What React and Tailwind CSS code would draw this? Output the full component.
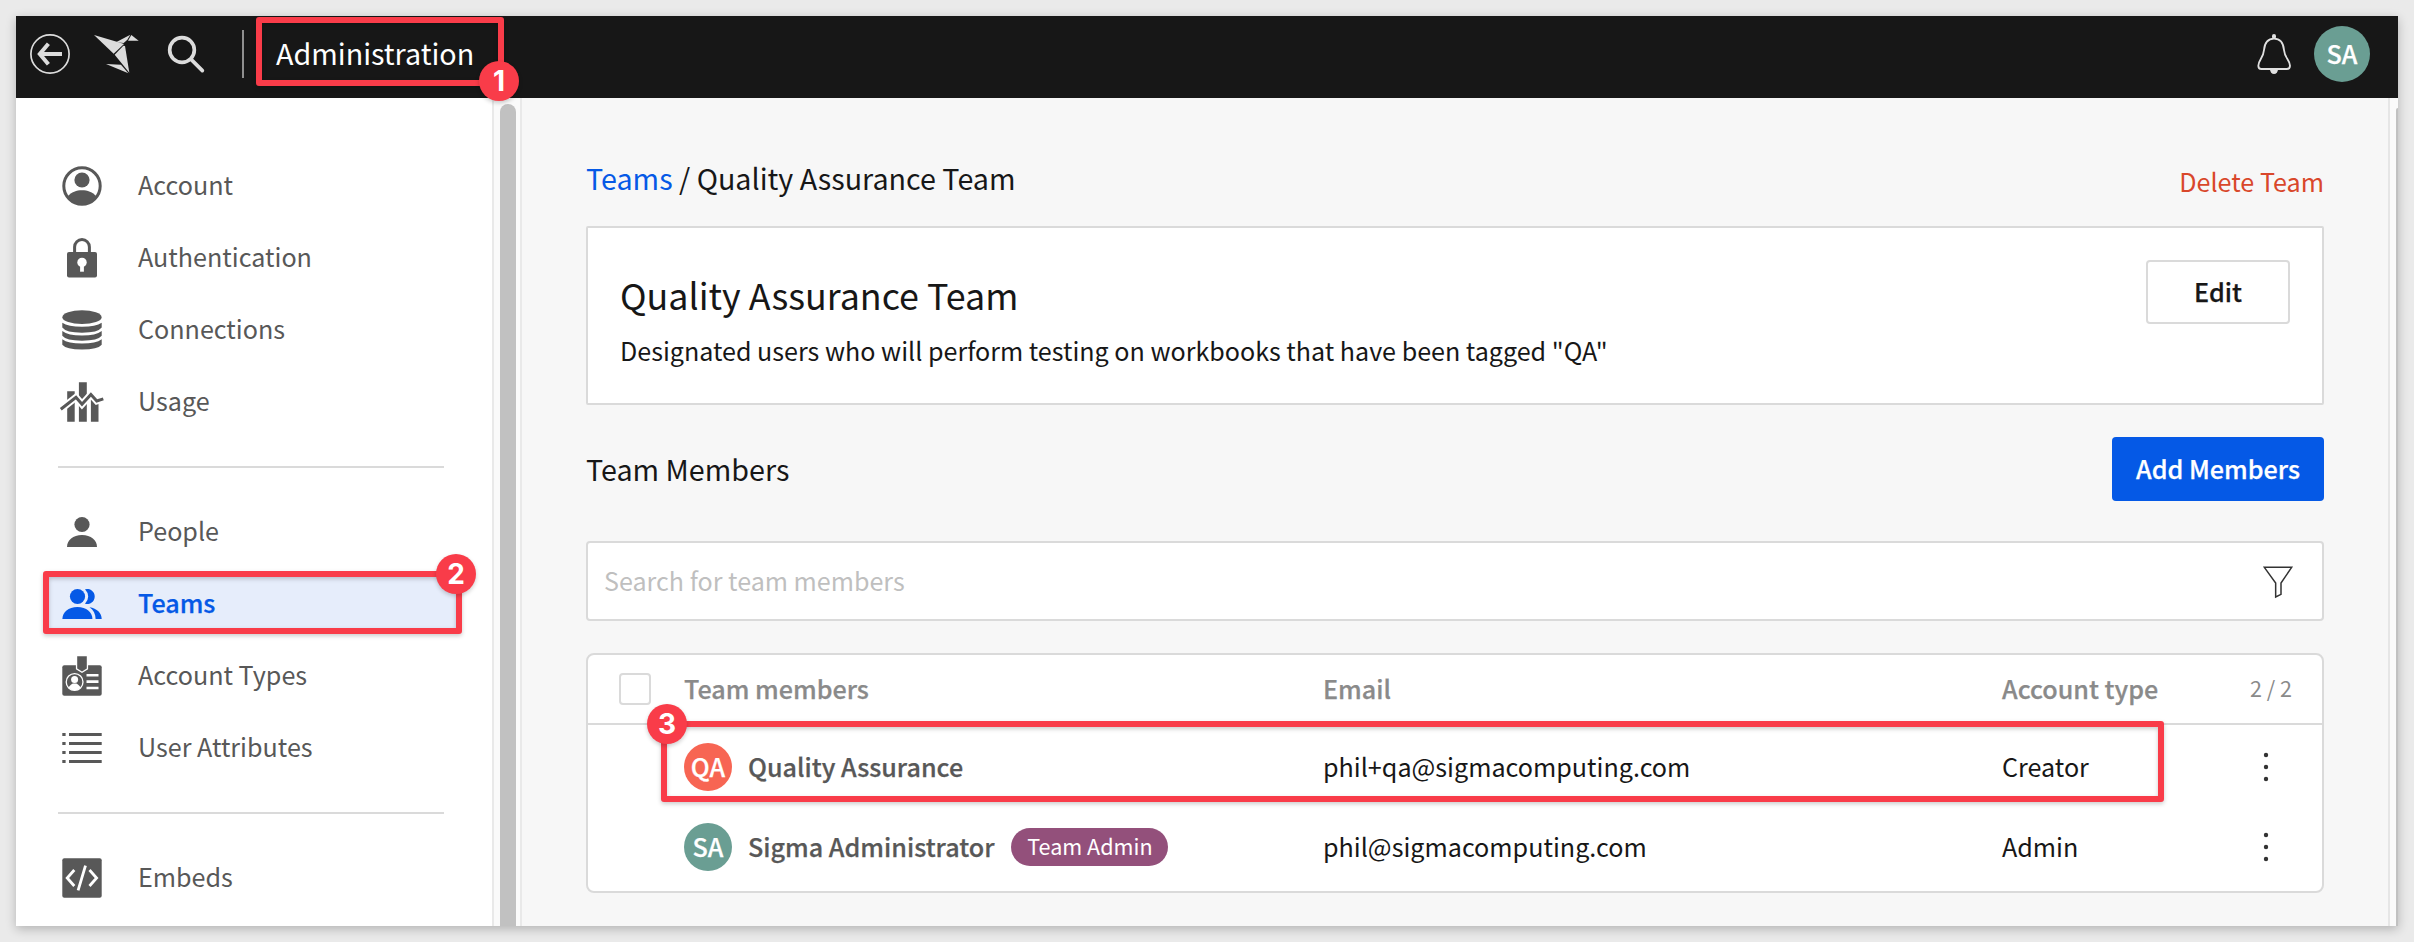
import React from "react";

const ICON = "h-10 w-10 shrink-0 overflow-visible";

function BackIcon() {
  return (
    <svg className={ICON} viewBox="0 0 40 40" fill="none" stroke="#dcdcdc">
      <circle cx="20" cy="20" r="19.1" strokeWidth="1.7" />
      <path d="M18.4 9.8 9.8 20l8.6 10.2" strokeWidth="4" />
      <path d="M10 20h22" strokeWidth="4" />
    </svg>
  );
}

function BirdLogo() {
  return (
    <svg className="ml-6 h-10 w-[45px] shrink-0" viewBox="222 42 135 120" fill="#dcdcdc">
      <path d="M222 45 303 69 312 72 281 101Z" />
      <path d="M288 67 331 44 322 59 311 69Z" />
      <path d="M334 45 356 62 324 62Z" />
      <path d="M284 104 310 77 315 78 328 158Z" />
      <path d="M258 132 303 134 325 160Z" />
    </svg>
  );
}

function SearchIcon() {
  return (
    <svg className="ml-7 h-10 w-10 shrink-0" viewBox="441 42 120 120" fill="none" stroke="#dcdcdc">
      <circle cx="486" cy="90" r="37" strokeWidth="11" />
      <path d="M514 119 547 152" strokeWidth="11" strokeLinecap="round" />
    </svg>
  );
}

function BellIcon() {
  return (
    <svg className={ICON} viewBox="582 102 120 120" fill="none" stroke="#e0e0e0">
      <path
        d="M642 116C622 116 614 129 612 150C610 175 595 180 595 197Q595 207 604 207H680Q690 207 690 197C690 180 674 175 672 150C670 129 662 116 642 116Z"
        strokeWidth="5.5"
      />
      <rect x="636" y="102" width="12" height="15" rx="6" fill="#e0e0e0" stroke="none" />
      <path d="M630 208H654A12 14 0 0 1 630 208Z" fill="#e0e0e0" stroke="none" />
    </svg>
  );
}

function AccountIcon() {
  return (
    <svg className={ICON} viewBox="0 0 40 40" fill="currentColor">
      <circle cx="20" cy="20" r="18.2" fill="none" stroke="currentColor" strokeWidth="3" />
      <circle cx="20" cy="14" r="7.6" />
      <path d="M5.5 30.5C9.5 26 14.5 24.3 20 24.3S30.5 26 34.5 30.5C31.5 36 26 38.8 20 38.8S8.5 36 5.5 30.5Z" />
    </svg>
  );
}

function LockIcon() {
  return (
    <svg className={ICON} viewBox="0 0 40 40" fill="currentColor">
      <path d="M12.6 16V9a7.4 7.4 0 0 1 14.8 0V16" fill="none" stroke="currentColor" strokeWidth="3" />
      <rect x="5" y="14" width="30" height="25.4" rx="2" />
      <circle cx="20" cy="24.4" r="4.7" fill="#fff" />
      <path d="M18.1 26h3.8v7.7h-3.8Z" fill="#fff" />
    </svg>
  );
}

function DatabaseIcon() {
  return (
    <svg className={ICON} viewBox="0 0 40 40" fill="currentColor">
      <ellipse cx="20" cy="7.2" rx="19.6" ry="6.9" />
      <path d="M.3 12.7Q6 16.8 20 16.8T39.7 12.7V17.5Q36 22.7 20 22.7T.3 17.5Z" />
      <path d="M.3 21Q6 25.6 20 25.6T39.7 21V25.8Q36 30.7 20 30.7T.3 25.8Z" />
      <path d="M.3 29.2Q6 33.5 20 33.5T39.7 29.2V34.7Q36 39.4 20 39.4T.3 34.7Z" />
    </svg>
  );
}

function UsageIcon() {
  const line = "M-1.2 27.3 14 15.3 20 22.3 28.9 12.5 34.8 19 41.3 16.8";
  return (
    <svg className={ICON} viewBox="0 0 40 40" fill="currentColor">
      <path d="M5.2 9.3h7.5v30.4H5.2ZM16.9.3h7.9v39.4h-7.9ZM28.9 17h7.6v22.7h-7.6Z" />
      <path d={line} fill="none" stroke="#fff" strokeWidth="7" />
      <path d={line} fill="none" stroke="currentColor" strokeWidth="3" />
    </svg>
  );
}

function PersonIcon() {
  return (
    <svg className={ICON} viewBox="0 0 40 40" fill="currentColor">
      <circle cx="20" cy="12.5" r="7.6" />
      <path d="M5 35C5 28 11 23 20 23S35 28 35 35Z" />
    </svg>
  );
}

function TeamsIcon() {
  return (
    <svg className={ICON} viewBox="0 0 40 40" fill="currentColor">
      <circle cx="15.5" cy="12.5" r="7.6" />
      <path d="M.4 35C.4 28 6.4 23 15.4 23S30.4 28 30.4 35Z" />
      <path d="M23 5.2A7.6 7.6 0 1 1 23 19.8Q26.2 16.5 26.2 12.5T23 5.2Z" />
      <path d="M27.5 23.3C35 24.5 39.7 29 39.7 35H33.6C33.6 30 31.5 26 27.5 23.3Z" />
    </svg>
  );
}

function BadgeIcon() {
  return (
    <svg className={ICON} viewBox="0 0 40 40" fill="currentColor">
      <rect x=".3" y="9.3" width="39.4" height="30.4" rx="2" />
      <path d="M15.2.3h9.6v12.2L20 15.5 15.2 12.5Z" stroke="#fff" strokeWidth="2.6" />
      <path d="M15.2.3h9.6v12.2L20 15.5 15.2 12.5Z" />
      <circle cx="12.6" cy="26" r="8.4" fill="none" stroke="#fff" strokeWidth="1.3" />
      <circle cx="12.6" cy="23.6" r="3.5" fill="#fff" />
      <path d="M6.5 31.5C8 29 10 28.3 10.8 27.5H14.4C15.2 28.3 17.2 29 18.7 31.5Q16 34.3 12.6 34.3T6.5 31.5Z" fill="#fff" />
      <path d="M24.5 19.2h12M24.5 25.6h12M24.5 32h12" stroke="#fff" strokeWidth="2.6" />
    </svg>
  );
}

function ListIcon() {
  return (
    <svg className={ICON} viewBox="0 0 40 40" stroke="currentColor" strokeWidth="3">
      <path d="M.3 6.5h3.3M7 6.5h32.7M.3 15.5h3.3M7 15.5h32.7M.3 24.5h3.3M7 24.5h32.7M.3 33.5h3.3M7 33.5h32.7" />
    </svg>
  );
}

function EmbedIcon() {
  return (
    <svg className={ICON} viewBox="0 0 40 40">
      <rect x=".3" y=".3" width="39.4" height="39.4" rx="2" fill="currentColor" />
      <path d="M12.3 12 5.2 20 12.3 28M27.5 12 34.6 20 27.5 28M23.5 7.7 16.1 32.3" fill="none" stroke="#fff" strokeWidth="2.8" />
    </svg>
  );
}

function FilterIcon() {
  return (
    <svg className="h-[35px] w-[35px] shrink-0" viewBox="600 430 105 105" fill="none" stroke="#333" strokeWidth="4.5">
      <path d="M613 440H695L663 487V521L647 529V487Z" />
    </svg>
  );
}

function NavItem({ icon: Glyph, label, active }) {
  return (
    <div className="flex h-[72px] items-center">
      <div
        className={
          active
            ? "flex h-[58px] w-[410px] items-center bg-[#e6edfb] pl-[15px] text-[#0559e6]"
            : "flex h-[58px] w-[410px] items-center pl-[15px] text-[#585858]"
        }
      >
        <Glyph />
        <span
          className={
            active
              ? "ml-9 pb-1 text-[25.14px] leading-9 font-medium [-webkit-text-stroke:0.25px]"
              : "ml-9 pb-1 text-[25.14px] leading-9"
          }
        >
          {label}
        </span>
      </div>
    </div>
  );
}

function Divider() {
  return <div className="my-7 ml-[11px] h-0.5 w-[386px] bg-[#dadada]" />;
}

function Sidebar() {
  return (
    <nav className="h-full w-[476px] shrink-0 overflow-hidden bg-white pt-[52px] pl-[31px]">
      <NavItem icon={AccountIcon} label="Account" />
      <NavItem icon={LockIcon} label="Authentication" />
      <NavItem icon={DatabaseIcon} label="Connections" />
      <NavItem icon={UsageIcon} label="Usage" />
      <Divider />
      <NavItem icon={PersonIcon} label="People" />
      <NavItem icon={TeamsIcon} label="Teams" active />
      <NavItem icon={BadgeIcon} label="Account Types" />
      <NavItem icon={ListIcon} label="User Attributes" />
      <Divider />
      <NavItem icon={EmbedIcon} label="Embeds" />
    </nav>
  );
}

function Header() {
  return (
    <header className="flex h-[82px] shrink-0 items-center bg-[#171717] pr-7 pb-1.5 pl-3.5">
      <BackIcon />
      <BirdLogo />
      <SearchIcon />
      <div className="ml-[35px] h-12 w-0.5 bg-[#8f8f8f]" />
      <div className="ml-8 pb-[3px] text-[28.68px] leading-10 text-white">Administration</div>
      <div className="ml-auto flex items-center gap-5">
        <BellIcon />
        <div className="flex h-14 w-14 items-center justify-center rounded-full bg-[#6a9e93] pb-[3px] text-[25.14px] leading-9 font-medium text-white [-webkit-text-stroke:0.25px]">
          SA
        </div>
      </div>
    </header>
  );
}

function Kebab() {
  return (
    <svg className="ml-3 h-10 w-2" viewBox="0 0 8 40" fill="#333">
      <circle cx="4" cy="8" r="2.2" />
      <circle cx="4" cy="20" r="2.2" />
      <circle cx="4" cy="32" r="2.2" />
    </svg>
  );
}

function MemberRow({ initials, color, name, tag, email, type }) {
  return (
    <div className="grid h-20 grid-cols-[96px_639px_679px_248px_1fr] items-center text-[25.14px] leading-9 text-[#171717]">
      <span />
      <div className="flex items-center">
        <div
          className={`flex h-12 w-12 items-center justify-center rounded-full pb-0.5 font-medium text-white [-webkit-text-stroke:0.25px] ${color}`}
        >
          {initials}
        </div>
        <span className="ml-4 pb-0.5 font-medium text-[#585858] [-webkit-text-stroke:0.25px]">{name}</span>
        {tag && (
          <span className="ml-[17px] flex h-[38px] w-[157px] items-center justify-center rounded-full bg-[#93507b] pb-[3px] text-[21.55px] text-white">
            {tag}
          </span>
        )}
      </div>
      <span className="pb-0.5">{email}</span>
      <span className="pb-0.5">{type}</span>
      <Kebab />
    </div>
  );
}

function Main() {
  return (
    <main className="flex h-full grow flex-col bg-[#f7f7f7] pr-16 pl-16 text-[#171717]">
      <div className="flex h-32 items-center justify-between">
        <div className="pt-[31px] text-[28.68px] leading-10">
          <span className="text-[#0559e6]">Teams</span> / Quality Assurance Team
        </div>
        <div className="pt-[38px] text-[25.14px] leading-9 text-[#d9472b]">Delete Team</div>
      </div>
      <section className="flex h-[179px] shrink-0 items-start justify-between rounded-xs border-2 border-[#dadada] bg-white pr-8 pl-8">
        <div className="pt-10">
          <h1 className="text-[35.84px] leading-[52px]">Quality Assurance Team</h1>
          <p className="mt-3 text-[25.09px] leading-9">
            Designated users who will perform testing on workbooks that have been tagged "QA"
          </p>
        </div>
        <button className="mt-8 flex h-16 w-36 items-center justify-center rounded-sm border-2 border-[#dadada] bg-white pb-0.5 text-[25.14px] leading-9 font-medium [-webkit-text-stroke:0.25px]">
          Edit
        </button>
      </section>
      <div className="mt-8 flex h-16 shrink-0 items-center justify-between">
        <h2 className="pb-px text-[28.68px] leading-10">Team Members</h2>
        <button className="flex h-16 w-[212px] items-center justify-center rounded-sm bg-[#0559e6] pb-0.5 text-[25.14px] leading-9 font-medium text-white [-webkit-text-stroke:0.25px]">
          Add Members
        </button>
      </div>
      <div className="mt-10 flex h-20 shrink-0 items-center justify-between rounded-sm border-2 border-[#dadada] bg-white pr-[27px] pl-4">
        <span className="pb-0.5 text-[25.09px] leading-9 text-[#bfbfbf]">Search for team members</span>
        <FilterIcon />
      </div>
      <section className="mt-8 h-60 shrink-0 rounded-lg border-2 border-[#dadada] bg-white">
        <div className="mb-0.5 grid h-[70px] grid-cols-[96px_639px_679px_248px_1fr] items-center border-b-2 border-[#dadada] text-[25.14px] leading-9 font-medium text-[#8a8a8a]">
          <div className="ml-[31px] h-8 w-8 rounded-sm border-2 border-[#dadada]" />
          <span className="pb-0.5 [-webkit-text-stroke:0.25px]">Team members</span>
          <span className="pb-0.5 [-webkit-text-stroke:0.25px]">Email</span>
          <span className="pb-0.5 [-webkit-text-stroke:0.25px]">Account type</span>
          <span className="pb-0.5 text-[21.55px] font-normal">2 / 2</span>
        </div>
        <MemberRow
          initials="QA"
          color="bg-[#f76553]"
          name="Quality Assurance"
          email="phil+qa@sigmacomputing.com"
          type="Creator"
        />
        <MemberRow
          initials="SA"
          color="bg-[#6a9e93]"
          name="Sigma Administrator"
          tag="Team Admin"
          email="phil@sigmacomputing.com"
          type="Admin"
        />
      </section>
    </main>
  );
}

function Callout({ box, badge, number }) {
  return (
    <>
      <div className={`absolute rounded-[3px] border-6 border-[#f93c49] drop-shadow-[0_2px_2px_rgba(0,0,0,0.2)] ${box}`} />
      <div
        className={`absolute flex h-10 w-10 items-center justify-center rounded-full bg-[#f93c49] font-[Inter,sans-serif] text-[28px] leading-10 font-bold text-white shadow-[0_2px_4px_rgba(0,0,0,0.2)] ${badge}`}
      >
        {number}
      </div>
    </>
  );
}

export default function App() {
  return (
    <div className="relative h-[942px] w-[2414px] overflow-hidden bg-[#eaeaea] p-4 font-['Noto_Sans_CJK_SC','Noto_Sans',sans-serif]">
      <div className="flex h-[910px] w-[2382px] flex-col overflow-hidden shadow-[0_3px_10px_rgba(0,0,0,0.24)]">
        <Header />
        <div className="flex h-[828px]">
          <Sidebar />
          <div className="w-[30px] shrink-0 border-x-2 border-[#e9e9e9] bg-[#fafafa] pt-1.5 pl-1.5">
            <div className="h-full w-4 rounded-t-full bg-[#c1c1c1]" />
          </div>
          <Main />
          <div className="w-2.5 shrink-0 border-l-2 border-[#e6e6e6] bg-[#fafafa] pt-2.5 pl-1.5">
            <div className="h-full w-0.5 rounded-tl-sm bg-[#c1c1c1]" />
          </div>
        </div>
      </div>
      <Callout box="left-[256px] top-[17px] h-[69px] w-[248px]" badge="left-[479px] top-[61px]" number="1" />
      <Callout box="left-[43px] top-[571px] h-[63px] w-[419px]" badge="left-[436px] top-[554px]" number="2" />
      <Callout box="left-[661px] top-[721px] h-[81px] w-[1503px]" badge="left-[647px] top-[704px]" number="3" />
    </div>
  );
}
